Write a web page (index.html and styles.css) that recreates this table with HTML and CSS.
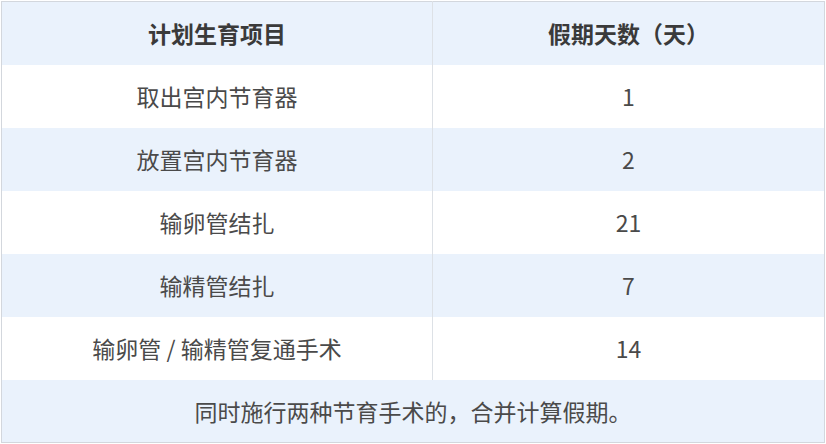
FILE: index.html
```html
<!DOCTYPE html>
<html lang="zh-CN">
<head>
<meta charset="utf-8">
<title>计划生育假期</title>
<link rel="stylesheet" href="styles.css">
</head>
<body>
<table class="leave-table">
  <thead>
    <tr class="row row-blue">
      <th class="col-item">计划生育项目</th>
      <th class="col-days">假期天数（天）</th>
    </tr>
  </thead>
  <tbody>
    <tr class="row row-white"><td class="col-item">取出宫内节育器</td><td class="col-days">1</td></tr>
    <tr class="row row-blue"><td class="col-item">放置宫内节育器</td><td class="col-days">2</td></tr>
    <tr class="row row-white"><td class="col-item">输卵管结扎</td><td class="col-days">21</td></tr>
    <tr class="row row-blue"><td class="col-item">输精管结扎</td><td class="col-days">7</td></tr>
    <tr class="row row-white"><td class="col-item">输卵管 / 输精管复通手术</td><td class="col-days">14</td></tr>
    <tr class="row row-blue"><td class="note" colspan="2">同时施行两种节育手术的，合并计算假期。</td></tr>
  </tbody>
</table>
</body>
</html>
```

FILE: styles.css
```css
html, body {
  margin: 0;
  padding: 0;
  background: #ffffff;
}
body {
  padding: 1px 0 0 1px;
  font-family: "Noto Sans CJK SC", "Noto Sans", sans-serif;
}
.leave-table {
  width: 824px;
  border-collapse: collapse;
  border: 1px solid #d3d7dd;
  table-layout: fixed;
}
.row {
  height: 63px;
}
.row-blue {
  background: #eaf2fc;
}
.row-white {
  background: #ffffff;
}
.leave-table th,
.leave-table td {
  padding: 0;
  text-align: center;
  vertical-align: middle;
  font-size: 23px;
  line-height: 30px;
  color: #4a4a4a;
  font-weight: 400;
}
.leave-table th {
  font-weight: 700;
  color: #3a3a3a;
}
.col-item {
  width: 430px;
  border-right: 1px solid #dde1e6;
}
.note {
  letter-spacing: 0;
}
```
